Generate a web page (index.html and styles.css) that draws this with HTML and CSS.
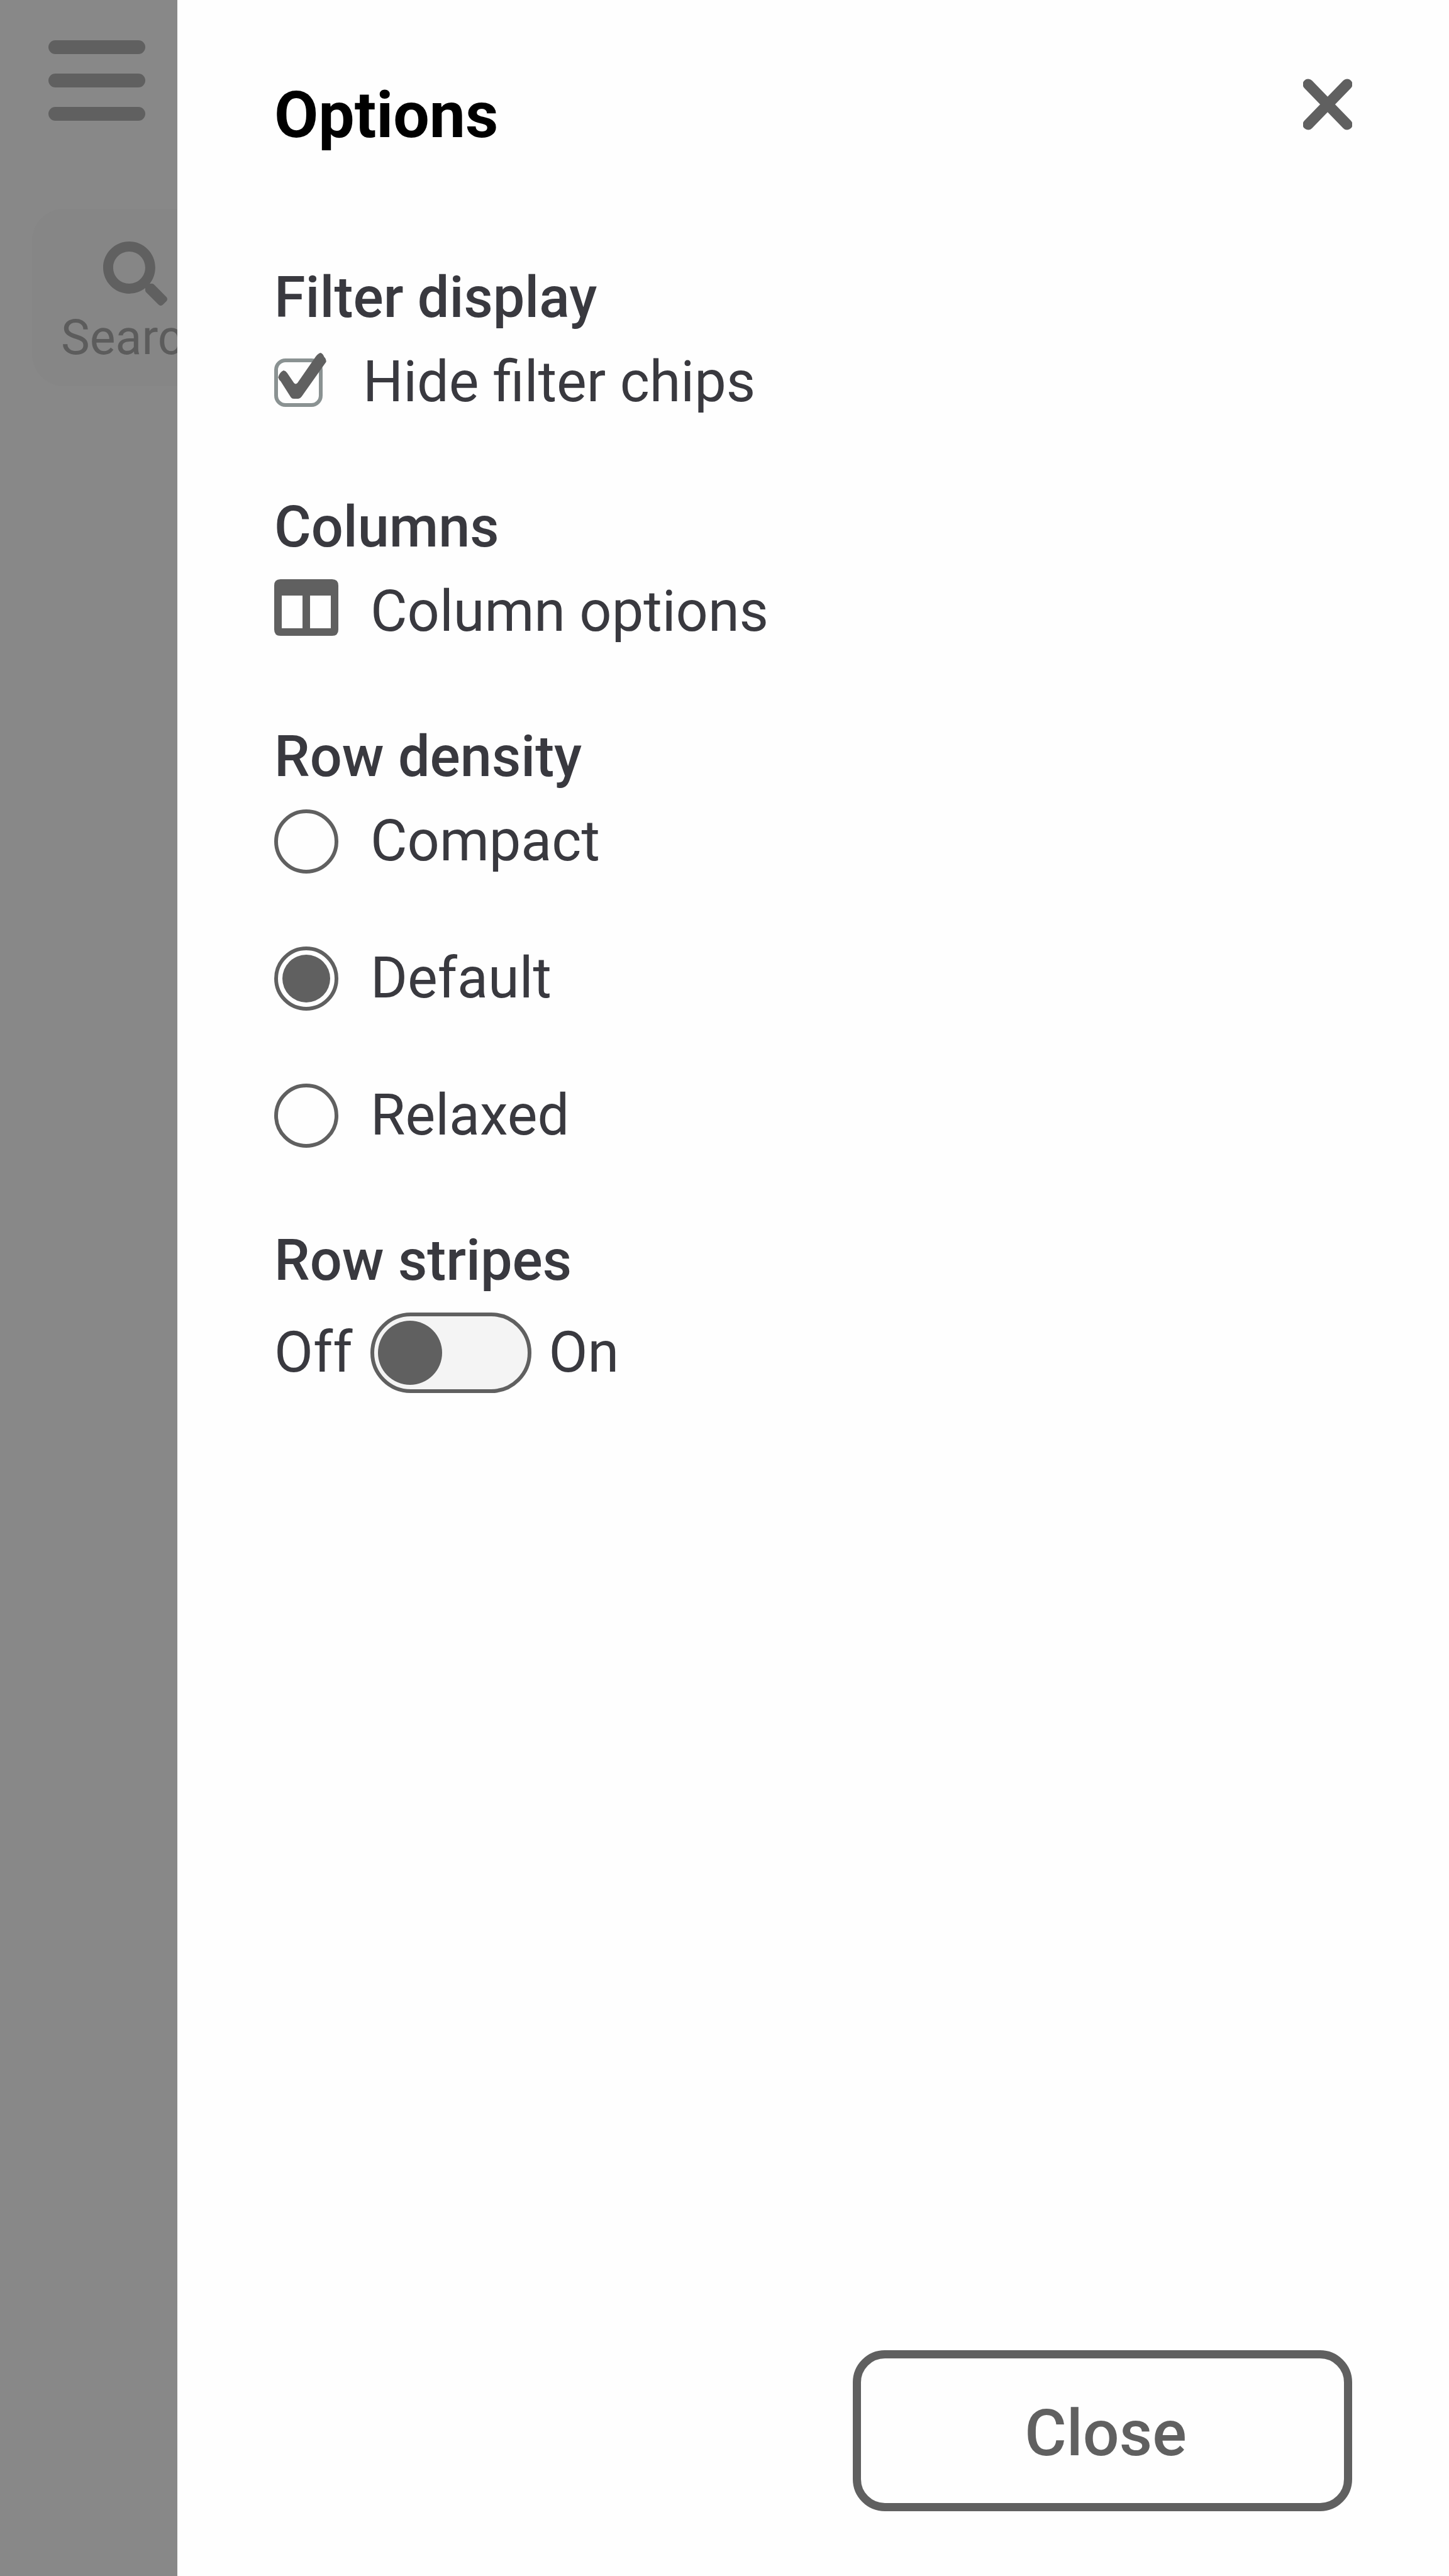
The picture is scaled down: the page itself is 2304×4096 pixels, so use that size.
FILE: index.html
```html
<!DOCTYPE html>
<html lang="en">
<head>
    <meta charset="UTF-8">
    <meta name="viewport" content="width=device-width, initial-scale=1.0">
    <title>Options</title>
    <link rel="stylesheet" href="styles.css">
</head>
<body>
    <div class="page">
        <button class="menu-btn" type="button" aria-label="Menu">
            <svg class="menu-icon" viewBox="0 0 154 128">
                <rect x="0" y="0" width="154" height="22" rx="11"/>
                <rect x="0" y="53" width="154" height="22" rx="11"/>
                <rect x="0" y="106" width="154" height="22" rx="11"/>
            </svg>
        </button>
        <button class="search-btn" type="button">
            <svg class="search-icon" viewBox="0 0 512 512">
                <path d="M505 442.7L405.3 343c-4.5-4.5-10.6-7-17-7H372c27.600-35.300 44-79.700 44-128C416 93.100 322.900 0 208 0S0 93.100 0 208s93.100 208 208 208c48.300 0 92.700-16.400 128-44v16.300c0 6.400 2.500 12.500 7 17l99.700 99.700c9.400 9.400 24.600 9.400 33.900 0l28.300-28.300c9.400-9.400 9.400-24.600.1-34zM208 336c-70.700 0-128-57.200-128-128 0-70.700 57.200-128 128-128 70.700 0 128 57.200 128 128 0 70.700-57.200 128-128 128z"/>
            </svg>
            <span>Search</span>
        </button>
    </div>

    <div class="drawer" role="dialog" aria-labelledby="title">
        <div class="drawer-header">
            <h2 id="title">Options</h2>
            <button class="x-btn" type="button" aria-label="Close options">
                <svg class="x-icon" viewBox="0 0 78 82">
                    <path d="M8 9L70 73M70 9L8 73"/>
                </svg>
            </button>
        </div>

        <div class="drawer-body">
            <section class="group">
                <h3>Filter display</h3>
                <label class="option check-option">
                    <span class="check-wrap">
                        <input type="checkbox" class="check" checked>
                        <svg class="check-mark" viewBox="0 0 267 255">
                            <path d="M0 136Q8 108 30 98Q42 100 50 112L88 168Q97 178 107 168L208 22Q220 4 236 0Q250 6 256 24Q266 32 267 50L130 244Q122 255 112 255H86Q76 255 70 246L14 158Q4 150 0 136Z"/>
                        </svg>
                    </span>
                    <span>Hide filter chips</span>
                </label>
            </section>

            <section class="group">
                <h3>Columns</h3>
                <button class="option" type="button">
                    <svg class="columns-icon" viewBox="0 0 102 90">
                        <path fill-rule="evenodd" d="M10 0H92Q102 0 102 10V80Q102 90 92 90H10Q0 90 0 80V10Q0 0 10 0ZM12 26V78H45V26ZM57 26V78H90V26Z"/>
                    </svg>
                    <span>Column options</span>
                </button>
            </section>

            <section class="group">
                <h3>Row density</h3>
                <div class="radio-list">
                    <label class="option"><input type="radio" class="radio" name="density"><span>Compact</span></label>
                    <label class="option"><input type="radio" class="radio" name="density" checked><span>Default</span></label>
                    <label class="option"><input type="radio" class="radio" name="density"><span>Relaxed</span></label>
                </div>
            </section>

            <section class="group">
                <h3>Row stripes</h3>
                <label class="switch-row">
                    <span>Off</span>
                    <input type="checkbox" class="switch" role="switch" aria-label="Row stripes">
                    <span>On</span>
                </label>
            </section>
        </div>

        <div class="drawer-footer">
            <button class="close-btn" type="button">Close</button>
        </div>
    </div>
</body>
</html>
```

FILE: styles.css
```css
* { box-sizing: border-box; }
body { margin: 0; background: #888888; color: #39393f; font-family: Roboto, Arial, sans-serif; font-size: 90px; line-height: 134px; overflow: hidden; }
button { font: inherit; color: inherit; background: none; border: none; padding: 0; cursor: pointer; }
svg { display: block; }
h2, h3 { margin: 0; }

/* page under the drawer */
.page { display: flex; flex-direction: column; align-items: flex-start; gap: 140px; padding: 64px 51px; }
.menu-btn { margin-left: 26px; }
.menu-icon { width: 154px; height: 128px; fill: #606060; }
.search-btn { display: flex; flex-direction: column; align-items: center; padding: 52px 46px 26px; background: #868686; border-radius: 51px; color: #5c5c5c; font-size: 77px; line-height: 102px; }
.search-icon { width: 102px; height: 102px; fill: #606060; }

/* drawer */
.drawer { position: fixed; top: 0; right: 0; bottom: 0; left: 282px; display: flex; flex-direction: column; padding: 103px 154px; background: #fefefe; }
.drawer-header { display: flex; justify-content: space-between; align-items: flex-start; margin-bottom: 144px; }
.drawer-header h2 { color: #000; font-size: 102px; line-height: 160px; font-weight: 700; }
.x-btn { padding-top: 22px; }
.x-icon { width: 78px; height: 82px; fill: none; stroke: #606060; stroke-width: 17px; stroke-linecap: round; }
.drawer-body { flex: 1; display: flex; flex-direction: column; gap: 97px; }
.group h3 { font-size: 90px; line-height: 134px; font-weight: 500; }
.option { display: flex; align-items: center; gap: 51px; width: max-content; cursor: pointer; }
.check-option { gap: 64px; }
.check-wrap { position: relative; width: 77px; height: 77px; }
.check { appearance: none; display: block; width: 77px; height: 77px; margin: 0; border: 6px solid #8a9292; border-radius: 18px; background: #fefefe; }
.check-mark { position: absolute; left: 6px; bottom: 13px; width: 77px; height: 73px; fill: #606060; pointer-events: none; }
.check:not(:checked) + .check-mark { display: none; }
.columns-icon { width: 102px; height: 90px; margin-bottom: 14px; fill: #606060; }
.radio-list { display: flex; flex-direction: column; gap: 84px; }
.radio { appearance: none; width: 102px; height: 102px; margin: 0; padding: 7px; border: 6px solid #606060; border-radius: 50%; background: #fefefe; }
.radio:checked { background: #606060 content-box; }
.switch-row { display: flex; align-items: center; gap: 28px; width: max-content; padding-top: 12px; cursor: pointer; }
.switch { appearance: none; display: flex; align-items: center; width: 256px; height: 128px; margin: 0; padding: 6px; border: 6px solid #606060; border-radius: 64px; background: #f4f4f4; }
.switch::before { content: ""; width: 102px; height: 102px; border-radius: 50%; background: #606060; }
.switch:checked { justify-content: flex-end; }
.drawer-footer { display: flex; justify-content: flex-end; }
.close-btn { min-width: 794px; height: 256px; padding: 8px 0 0 10px; border: 13px solid #606060; border-radius: 51px; color: #606060; font-size: 102px; font-weight: 500; }
```
